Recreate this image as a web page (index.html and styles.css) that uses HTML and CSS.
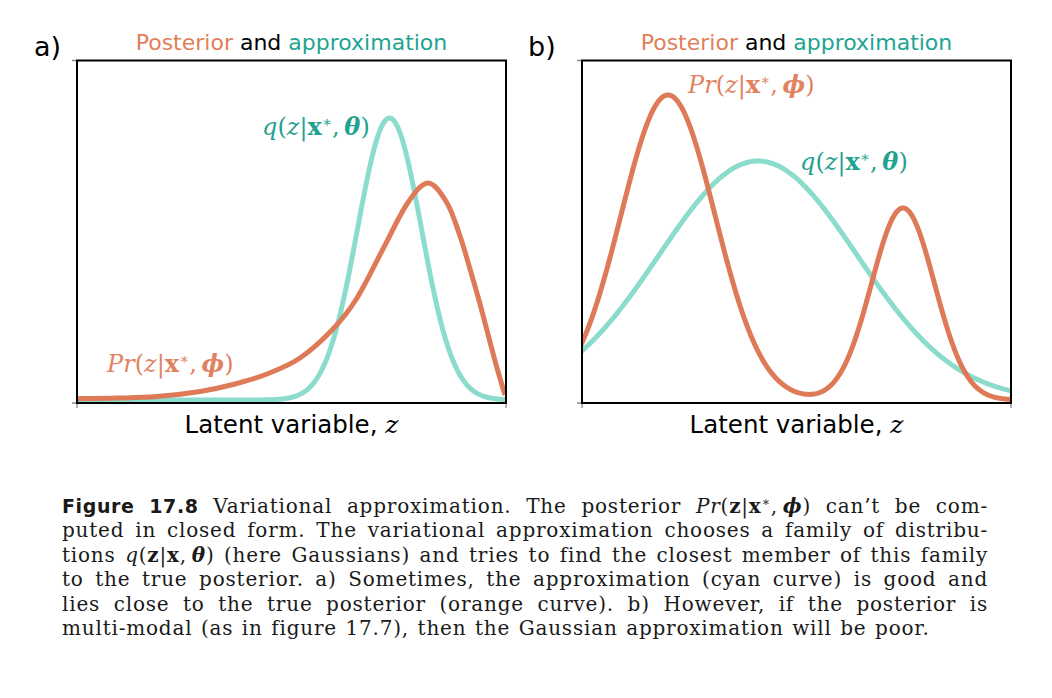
FILE: index.html
```html
<!DOCTYPE html>
<html lang="en">
<head>
<meta charset="utf-8">
<title>Figure 17.8 – Variational approximation</title>
<link rel="stylesheet" href="styles.css">
</head>
<body>
<main class="page">
  <div class="figure">
    <section class="panel panel-a">
      <div class="tag">a)</div>
      <div class="title"><span class="post">Posterior</span> and <span class="appr">approximation</span></div>
      <div class="plot">
        <svg class="axes" viewBox="0 0 431 345" width="431" height="345">
          <defs><clipPath id="clip-a"><rect x="1" y="1" width="429" height="343"/></clipPath></defs>
          <g clip-path="url(#clip-a)"><g transform="translate(1 1)">
            <path id="a-cyan" class="curve cyan" d=""/>
            <path id="a-orange" class="curve orange" d=""/>
          </g></g>
          <rect class="frame" x="1" y="1.5" width="429" height="342.5"/>
          <path class="tick" d="M-4 1.5H0M-4 344H0M1 345V349M430 345V349"/>
        </svg>
        <div class="math teal qa"><i>q</i>(<i>z</i>|<b>x</b><sup>∗</sup>,&#8201;<b class="bi">θ</b>)</div>
        <div class="math coral pra"><i>Pr</i>(<i>z</i>|<b>x</b><sup>∗</sup>,&#8201;<b class="bi">ϕ</b>)</div>
      </div>
      <div class="xlabel">Latent variable, <i class="mz">z</i></div>
    </section>
    <section class="panel panel-b">
      <div class="tag">b)</div>
      <div class="title"><span class="post">Posterior</span> and <span class="appr">approximation</span></div>
      <div class="plot">
        <svg class="axes" viewBox="0 0 431 345" width="431" height="345">
          <defs><clipPath id="clip-b"><rect x="1" y="1" width="429" height="343"/></clipPath></defs>
          <g clip-path="url(#clip-b)"><g transform="translate(1 1)">
            <path id="b-cyan" class="curve cyan" d=""/>
            <path id="b-orange" class="curve orange" d=""/>
          </g></g>
          <rect class="frame" x="1" y="1.5" width="429" height="342.5"/>
          <path class="tick" d="M-4 1.5H0M-4 344H0M1 345V349M430 345V349"/>
        </svg>
        <div class="math coral prb"><i>Pr</i>(<i>z</i>|<b>x</b><sup>∗</sup>,&#8201;<b class="bi">ϕ</b>)</div>
        <div class="math teal qb"><i>q</i>(<i>z</i>|<b>x</b><sup>∗</sup>,&#8201;<b class="bi">θ</b>)</div>
      </div>
      <div class="xlabel">Latent variable, <i class="mz">z</i></div>
    </section>
  </div>
  <div class="caption">
    <p class="line"><b class="fignum">Figure 17.8</b> Variational approximation. The posterior <i>Pr</i>(<b>z</b>|<b>x</b><sup>∗</sup>,&#8201;<b class="bi">ϕ</b>) can’t be com-</p>
    <p class="line">puted in closed form. The variational approximation chooses a family of distribu-</p>
    <p class="line">tions <i>q</i>(<b>z</b>|<b>x</b>,&#8201;<b class="bi">θ</b>) (here Gaussians) and tries to find the closest member of this family</p>
    <p class="line">to the true posterior. a) Sometimes, the approximation (cyan curve) is good and</p>
    <p class="line">lies close to the true posterior (orange curve). b) However, if the posterior is</p>
    <p class="line last">multi-modal (as in figure 17.7), then the Gaussian approximation will be poor.</p>
  </div>
</main>
<script src="script.js"></script>
</body>
</html>
```
FILE: styles.css
```css
html, body {
  margin: 0;
  padding: 0;
  background: #ffffff;
}

.page {
  width: 1052px;
  height: 698px;
  color: #111;
}

.figure {
  display: flex;
  gap: 13px;
}

.panel {
  display: grid;
  grid-template-rows: 59px 345px auto;
}

.panel-a { grid-template-columns: 76px 431px; }
.panel-b { grid-template-columns: 61px 431px; }

.tag {
  grid-row: 1 / 3;
  grid-column: 1;
  align-self: start;
  padding-top: 31px;
  font: 27px/32px "DejaVu Sans", sans-serif;
  color: #000;
}
.panel-a .tag { padding-left: 34px; }
.panel-b .tag { padding-left: 8px; }

.title {
  grid-row: 1;
  grid-column: 2;
  padding-top: 31px;
  text-align: center;
  font: 22px/24px "DejaVu Sans", sans-serif;
  color: #000;
  white-space: nowrap;
}
.post { color: #e07f5a; }
.appr { color: #1ea492; }

.plot {
  grid-row: 2;
  grid-column: 2;
  position: relative;
  width: 431px;
  height: 345px;
}

.axes {
  display: block;
  overflow: visible;
}

.curve {
  fill: none;
  stroke-width: 5;
  stroke-linejoin: round;
  stroke-linecap: butt;
}
.cyan { stroke: #8cdccd; }
.orange { stroke: #de7a57; }

.frame {
  fill: none;
  stroke: #000;
  stroke-width: 2;
}
.tick {
  stroke: #8a8a8a;
  stroke-width: 1.3;
  fill: none;
}

.math {
  position: absolute;
  font: 24px/24px "DejaVu Serif", serif;
  white-space: nowrap;
}
.math i { font-style: italic; }
.math b { font-weight: bold; font-style: normal; }
.math b.bi { font-style: italic; }
.math sup {
  font-size: 0.62em;
  line-height: 0;
  vertical-align: 0.55em;
  font-weight: normal;
}
.teal { color: #1fa28f; }
.coral { color: #e0825f; }

.qa  { left: 186px; top: 56px; }
.pra { left: 31px;  top: 293px; }
.prb { left: 107px; top: 14px; }
.qb  { left: 219px; top: 91px; }

.xlabel {
  grid-row: 3;
  grid-column: 2;
  padding-top: 6px;
  text-align: center;
  font: 24.5px/30px "DejaVu Sans", sans-serif;
  color: #000;
  white-space: nowrap;
}
.mz {
  font-family: "DejaVu Serif", serif;
  font-style: italic;
  font-size: 25px;
}

.caption {
  margin: 54px 0 0 62px;
  width: 926px;
  font: 20px/24.4px "DejaVu Serif", serif;
  letter-spacing: 0.8px;
  color: #1a1a1a;
}
.line {
  margin: 0;
  text-align: justify;
  text-align-last: justify;
}
.line.last {
  text-align-last: left;
  word-spacing: 1.4px;
}
.caption i { font-style: italic; }
.caption b { font-weight: bold; font-style: normal; }
.caption b.bi { font-style: italic; }
.caption sup {
  font-size: 0.62em;
  line-height: 0;
  vertical-align: 0.55em;
}
.fignum {
  font-family: "DejaVu Sans", sans-serif;
  font-size: 19px;
  letter-spacing: 0.6px;
}
```
FILE: script.js
```js
(function () {
  function g(x, m, s) { return Math.exp(-(x - m) * (x - m) / (2 * s * s)); }

  function fnPath(f) {
    var d = '';
    for (var x = -2; x <= 431; x += 1) {
      d += (d ? 'L' : 'M') + x + ' ' + f(x).toFixed(2);
    }
    return d;
  }

  function spline(p) {
    var d = 'M' + p[0][0] + ' ' + p[0][1];
    for (var i = 0; i < p.length - 1; i++) {
      var p0 = p[i - 1] || p[i], p1 = p[i], p2 = p[i + 1], p3 = p[i + 2] || p2;
      var c1x = p1[0] + (p2[0] - p0[0]) / 6, c1y = p1[1] + (p2[1] - p0[1]) / 6;
      var c2x = p2[0] - (p3[0] - p1[0]) / 6, c2y = p2[1] - (p3[1] - p1[1]) / 6;
      d += 'C' + c1x.toFixed(2) + ' ' + c1y.toFixed(2) + ' ' + c2x.toFixed(2) + ' ' +
        c2y.toFixed(2) + ' ' + p2[0] + ' ' + p2[1];
    }
    return d;
  }

  function set(id, d) {
    var el = document.getElementById(id);
    if (el) el.setAttribute('d', d);
  }

  set('a-cyan', fnPath(function (x) { return 340 - 282 * g(x, 312.5, 32); }));
  set('a-orange', spline([
    [-2, 338.7], [40, 338.1], [80, 336.6], [123, 331.5], [156, 324.5], [190, 314],
    [223, 298], [256, 269], [280, 238], [306, 189], [330, 144], [351, 123],
    [370, 143], [383, 176], [393, 209], [403, 244], [413, 282], [420, 308], [428, 335]
  ]));
  set('b-cyan', fnPath(function (x) { return 340 - 239 * g(x, 176, 99); }));
  set('b-orange', fnPath(function (x) {
    return 340 - 305 * g(x, 86, 47) - 192 * g(x, 321, 31.5);
  }));
})();
```
